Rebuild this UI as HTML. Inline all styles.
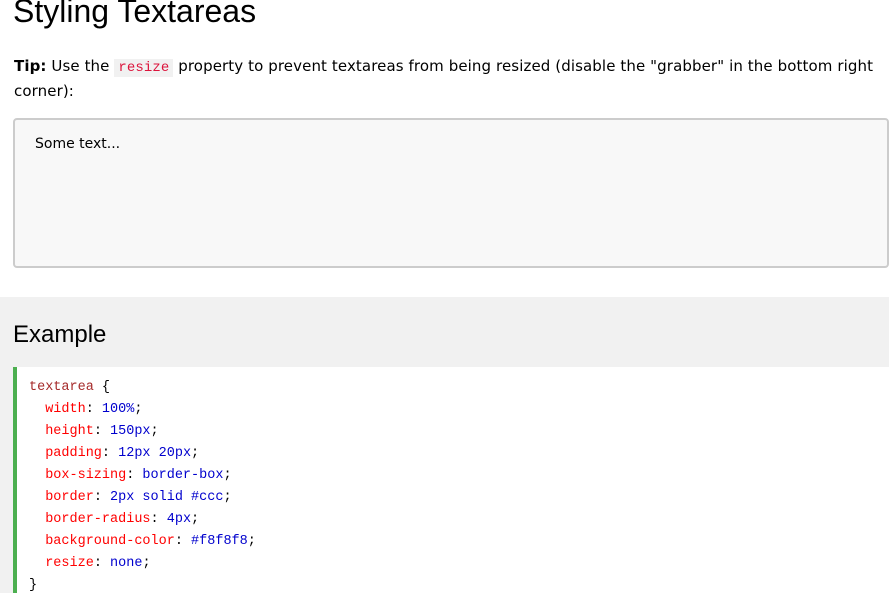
<!DOCTYPE html>
<html style="overflow:hidden"><head><style>
html,body{margin:0;width:889px;height:593px;overflow:hidden}
body{background:#fff;font-family:Verdana,"DejaVu Sans",sans-serif;color:#000;position:relative}
h1{position:absolute;left:13px;top:-7px;margin:0;font-family:"Segoe UI","Liberation Sans",Arial,sans-serif;font-weight:normal;font-size:32px;}
.tip{position:absolute;left:14px;top:55px;width:870px;font-size:15px;line-height:23px;letter-spacing:0.1px}
.tip code{font-family:Consolas,"Liberation Mono",monospace;color:#dc143c;background:#f1f1f1;padding:1px 4px;font-size:14px}
.ta{position:absolute;left:13px;top:118px;width:876px;height:150px;box-sizing:border-box;border:2px solid #ccc;border-radius:4px;background:#f8f8f8;padding:16px 20px;font-size:14px}
.band{position:absolute;left:0;top:297px;width:889px;height:296px;background:#f1f1f1}
h2{position:absolute;left:13px;top:321px;margin:0;font-family:"Segoe UI","Liberation Sans",Arial,sans-serif;font-weight:normal;font-size:24px}
.code{position:absolute;left:13px;top:367px;width:876px;height:226px;overflow:hidden;background:#fff;border-left:4px solid #4caf50;box-sizing:border-box;padding:10px 0 0 12px;font-family:Consolas,"Liberation Mono",monospace;font-size:13.5px;line-height:22px;white-space:pre}
.s{color:#a52a2a}.p{color:red}.v{color:#0000cd}
</style></head><body>
<h1>Styling Textareas</h1>
<div class="tip"><b>Tip:</b> Use the <code>resize</code> property to prevent textareas from being resized (disable the "grabber" in the bottom right corner):</div>
<div class="ta">Some text...</div>
<div class="band"></div>
<h2>Example</h2>
<div class="code"><span class="s">textarea</span> {
  <span class="p">width</span>:<span class="v"> 100%</span>;
  <span class="p">height</span>:<span class="v"> 150px</span>;
  <span class="p">padding</span>:<span class="v"> 12px 20px</span>;
  <span class="p">box-sizing</span>:<span class="v"> border-box</span>;
  <span class="p">border</span>:<span class="v"> 2px solid #ccc</span>;
  <span class="p">border-radius</span>:<span class="v"> 4px</span>;
  <span class="p">background-color</span>:<span class="v"> #f8f8f8</span>;
  <span class="p">resize</span>:<span class="v"> none</span>;
}</div>
</body></html>
